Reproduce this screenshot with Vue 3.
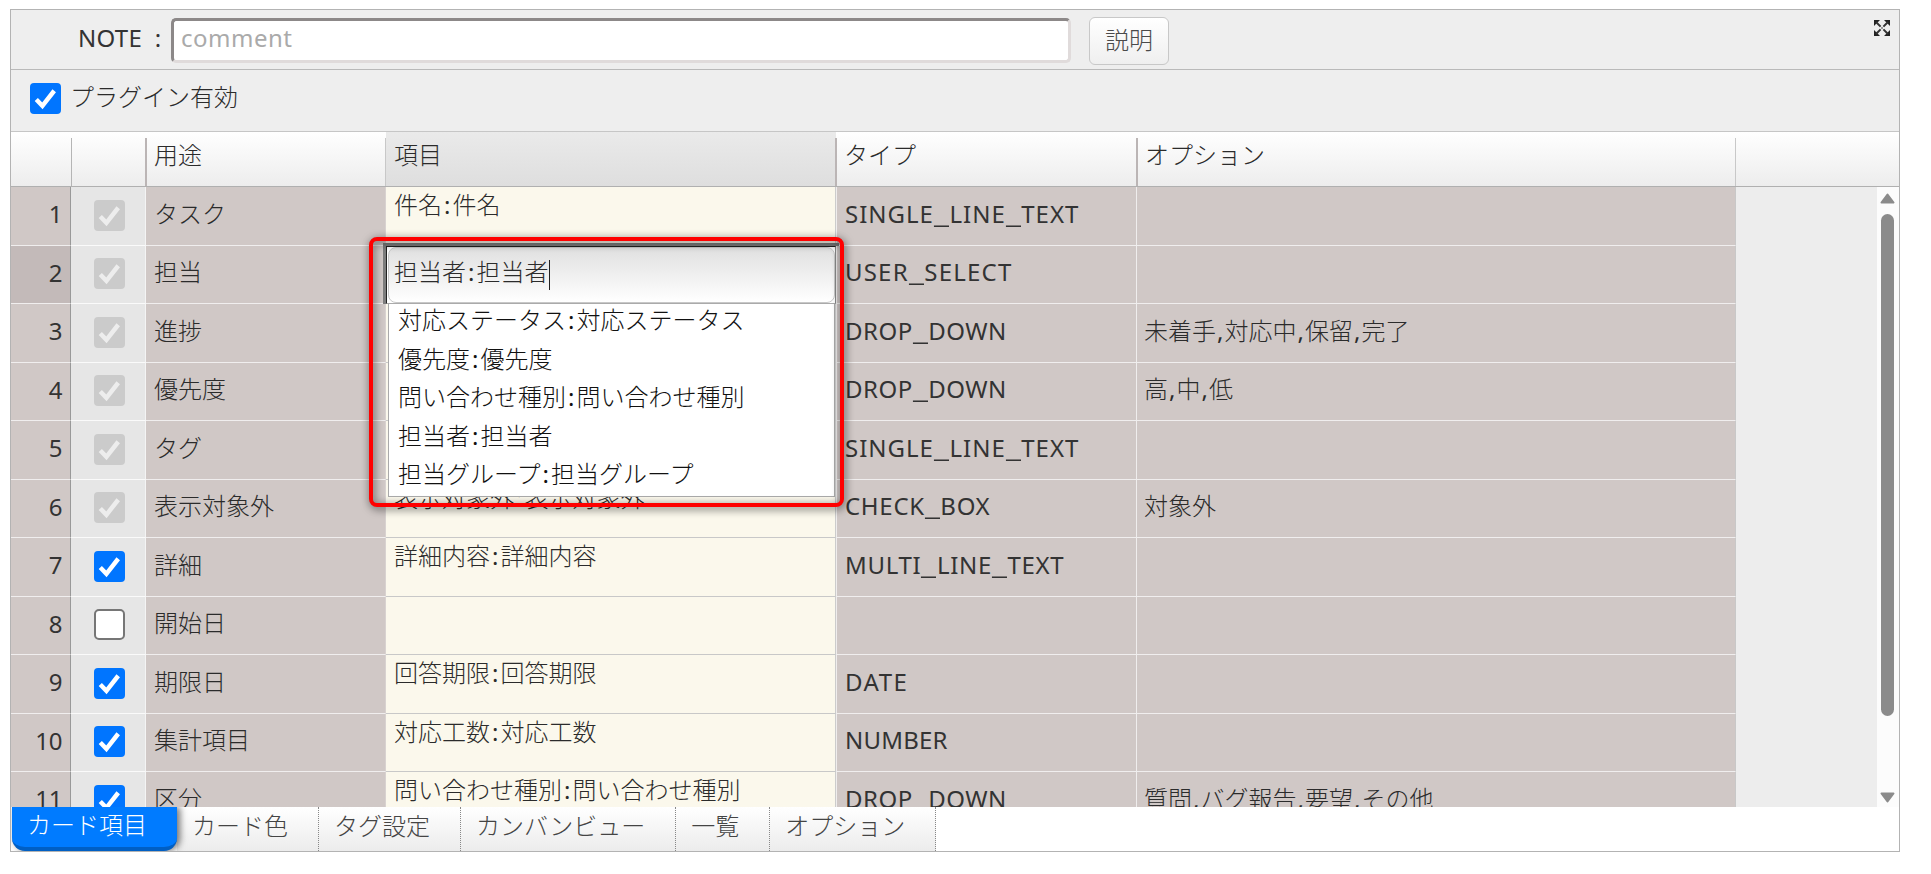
<script setup>
const rows = [
  { check: 'locked', use: 'タスク', item: '件名:件名', type: 'SINGLE_LINE_TEXT', option: '' },
  { check: 'locked', use: '担当', item: '', type: 'USER_SELECT', option: '' },
  { check: 'locked', use: '進捗', item: '', type: 'DROP_DOWN', option: '未着手,対応中,保留,完了' },
  { check: 'locked', use: '優先度', item: '', type: 'DROP_DOWN', option: '高,中,低' },
  { check: 'locked', use: 'タグ', item: '', type: 'SINGLE_LINE_TEXT', option: '' },
  { check: 'locked', use: '表示対象外', item: '表示対象外:表示対象外', type: 'CHECK_BOX', option: '対象外' },
  { check: 'on', use: '詳細', item: '詳細内容:詳細内容', type: 'MULTI_LINE_TEXT', option: '' },
  { check: 'off', use: '開始日', item: '', type: '', option: '' },
  { check: 'on', use: '期限日', item: '回答期限:回答期限', type: 'DATE', option: '' },
  { check: 'on', use: '集計項目', item: '対応工数:対応工数', type: 'NUMBER', option: '' },
  { check: 'on', use: '区分', item: '問い合わせ種別:問い合わせ種別', type: 'DROP_DOWN', option: '質問,バグ報告,要望,その他' },
]
const choices = [
  '対応ステータス:対応ステータス',
  '優先度:優先度',
  '問い合わせ種別:問い合わせ種別',
  '担当者:担当者',
  '担当グループ:担当グループ',
]
const tabs = ['カード項目', 'カード色', 'タグ設定', 'カンバンビュー', '一覧', 'オプション']
const classes = { ':': 'colon', ',': 'comma', _: 'under' }
const parts = (text) => text.split(/([:,_])/).filter(Boolean)
const partClass = (p) => classes[p] || 'word'
</script>

<template>
  <main class="page">
    <div class="frame">
      <header class="note-bar">
        <label class="note-label">NOTE :</label>
        <div class="note-input">comment</div>
        <button class="help" type="button">説明</button>
        <svg class="expand" viewBox="0 0 16 16" width="16" height="16">
          <path d="M0 0H6L4.3 1.7L1.7 4.3L0 6ZM16 0V6L11.7 1.7L10 0ZM0 16V10L4.3 14.3L6 16ZM16 16H10L14.3 11.7L16 10Z" fill="#222" />
          <path d="M2 2L6.6 6.600M14 2L9.400 6.600M2 14L6.600 9.400M14 14L9.400 9.400" stroke="#333" stroke-width="2" />
          <path d="M7 7h2v2h-2z" fill="#999" />
        </svg>
      </header>

      <div class="enable-bar">
        <span class="check on"><svg viewBox="0 0 32 32"><path d="M6.500 17L12.800 23.500L25 8" /></svg></span>
        <span class="enable-label">プラグイン有効</span>
      </div>

      <div class="cols head">
        <div></div>
        <div class="sep"></div>
        <div class="sep dbl">用途</div>
        <div class="sep current">項目</div>
        <div class="sep dbl">タイプ</div>
        <div class="sep dbl">オプション</div>
        <div class="sep last"></div>
      </div>

      <div class="body">
        <div class="rows">
          <div v-for="(row, i) in rows" :key="i" class="cols row" :class="{ selected: i === 1 }">
            <div class="num">{{ i + 1 }}</div>
            <div class="tick">
              <span class="check" :class="row.check">
                <svg v-if="row.check !== 'off'" viewBox="0 0 32 32"><path d="M6.500 17L12.800 23.500L25 8" /></svg>
              </span>
            </div>
            <div class="cell use">{{ row.use }}</div>
            <div class="cell item"><span v-for="(p, k) in parts(row.item)" :key="k" :class="partClass(p)">{{ p }}</span></div>
            <div class="cell type" :class="row.type.toLowerCase()"><span v-for="(p, k) in parts(row.type)" :key="k" :class="partClass(p)">{{ p }}</span></div>
            <div class="cell option"><span v-for="(p, k) in parts(row.option)" :key="k" :class="partClass(p)">{{ p }}</span></div>
            <div></div>
          </div>
        </div>
        <div class="scroll">
          <svg width="15" height="11" viewBox="0 0 15 11"><path d="M7.500 1.500L13.500 9.500H1.500Z" /></svg>
          <div class="thumb"></div>
          <svg width="15" height="11" viewBox="0 0 15 11"><path d="M7.500 9.500L13.500 1.500H1.500Z" /></svg>
        </div>
      </div>

      <nav class="tabs">
        <div v-for="(t, i) in tabs" :key="t" class="tab" :class="{ active: i === 0 }">{{ t }}</div>
      </nav>
    </div>

    <div class="editor">
      <div class="field"><span v-for="(p, k) in parts('担当者:担当者')" :key="k" :class="partClass(p)">{{ p }}</span><i class="caret"></i></div>
    </div>
    <div class="choices">
      <div v-for="c in choices" :key="c" class="choice"><span v-for="(p, k) in parts(c)" :key="k" :class="partClass(p)">{{ p }}</span></div>
    </div>
    <div class="highlight"></div>
  </main>
</template>

<style>
body {
  background: #fff;
}
</style>

<style scoped>
* {
  box-sizing: border-box;
}
.page {
  position: relative;
  width: 1931px;
  height: 874px;
  padding: 9px 0 0 10px;
  overflow: hidden;
  font: 24px/36px "Noto Sans", "Noto Sans CJK JP", sans-serif;
  font-weight: 300;
  color: #2b2b2b;
}
.frame {
  display: flex;
  flex-direction: column;
  width: 1890px;
  height: 843px;
  border: 1px solid #b3b3b3;
  background: #fff;
}
.note-bar {
  display: flex;
  align-items: flex-start;
  height: 60px;
  border-bottom: 1px solid #b9b9b9;
  background: #eee;
}
.note-label {
  width: 160px;
  padding: 10px 0 0 67px;
  color: #333;
  font-weight: 400;
  letter-spacing: 0.3px;
  word-spacing: 6px;
  white-space: nowrap;
}
.note-input {
  width: 900px;
  height: 45px;
  margin-top: 8px;
  padding-left: 7px;
  border: 3px solid;
  border-color: #8c8888 #e0dbdb #e0dbdb #8c8888;
  border-radius: 5px;
  background: #fff;
  color: #aaa;
  font-weight: 400;
  letter-spacing: 0.5px;
  line-height: 34px;
}
.help {
  width: 80px;
  height: 48px;
  margin: 7px 0 0 18px;
  padding: 0 0 2px;
  border: 1px solid #c8c8c8;
  border-radius: 6px;
  background: linear-gradient(#fff, #efefef);
  font: inherit;
  color: #4a4a4a;
}
.expand {
  margin: 10px 9px 0 auto;
}
.enable-bar {
  display: flex;
  align-items: flex-start;
  height: 62px;
  padding: 13px 0 0 19px;
  border-bottom: 1px solid #c6c6c6;
  background: #eee;
}
.enable-label {
  margin: -4px 0 0 9px;
}
.check {
  display: block;
  flex: none;
  width: 31px;
  height: 31px;
  border-radius: 4px;
}
.check.on {
  background: #0075ff;
}
.check.locked {
  background: #cbcbcb;
}
.check.off {
  border: 2px solid #767676;
  border-radius: 5px;
  background: #fff;
}
.check svg {
  display: block;
  width: 31px;
  height: 31px;
  fill: none;
  stroke: #fff;
  stroke-width: 4.6;
}
.check.locked svg {
  stroke: #ededed;
}
.cols {
  display: grid;
  grid-template-columns: 60px 75px 240px 450px 301px 599px 1fr;
}
.head {
  height: 55px;
  border-bottom: 1px solid #b0b0b0;
  background: linear-gradient(#fff, #ededed);
}
.head > div {
  position: relative;
  padding: 5px 0 0 8px;
}
.head > .current {
  background: linear-gradient(#eaeaea, #dedede);
}
.sep::before {
  content: '';
  position: absolute;
  left: 0;
  top: 6px;
  bottom: 0;
  width: 1px;
  background: #b5b5b5;
}
.sep.dbl::before {
  left: -1px;
  width: 2px;
  background: #bbb5b5;
}
.sep.current::before,
.sep.last::before {
  left: -1px;
  background: #c8c8c8;
}
.body {
  display: flex;
  height: 620px;
  overflow: hidden;
}
.rows {
  width: 1866px;
  background: #ededed;
}
.row {
  height: 59px;
}
.row:nth-child(even) {
  height: 58px;
}
.num {
  padding: 9px 8px 0 0;
  border-right: 1px solid #999;
  border-bottom: 1px solid #f0eeee;
  background: #d0c8c6;
  color: #333;
  font-weight: 400;
  letter-spacing: -0.4px;
  text-align: right;
}
.selected .num {
  background: #c3bab9;
}
.tick {
  padding: 13px 0 0 23px;
  border-right: 1px solid #f4f4f4;
  border-bottom: 1px solid #fafafa;
  background: #e6e6e6;
}
.row:nth-child(even) .tick {
  padding-top: 12px;
}
.cell {
  padding: 9px 0 0 8px;
  border-bottom: 1px solid #f0eeee;
  background: #d0c8c6;
  white-space: nowrap;
}
.use {
  border-right: 1px solid #d8d2d0;
}
.row:nth-child(even) .cell:not(.item) {
  padding-top: 8px;
}
.cell.item {
  padding: 0 0 0 8px;
  border-bottom-color: #c8c8c8;
  border-right: 1px solid #ccc;
  background: #fbf8ec;
}
.type {
  border-left: 1px solid #efeded;
  border-right: 1px solid #efeded;
  color: #333;
  font-weight: 400;
  letter-spacing: 0.5px;
}
.single_line_text {
  letter-spacing: 1px;
}
.user_select {
  letter-spacing: 1.2px;
}
.multi_line_text,
.check_box {
  letter-spacing: 0.7px;
}
.date {
  letter-spacing: 1.5px;
}
.number {
  letter-spacing: 0.2px;
}
.option {
  border-right: 1px solid #c8c8c8;
}
.cell.option {
  padding-left: 7px;
}
.colon,
.comma {
  display: inline-block;
  width: 10.500px;
  font-weight: 400;
  text-align: center;
}
.comma {
  width: 8.500px;
}
.under {
  display: inline-block;
  width: 15.500px;
  transform: scaleX(1.4);
  transform-origin: left;
}
.scroll {
  display: flex;
  flex-direction: column;
  align-items: center;
  width: 22px;
  padding: 6px 1px 4px 0;
  background: #fcfcfc;
}
.scroll svg {
  fill: #8b8b8b;
  stroke: #8b8b8b;
  stroke-width: 2;
  stroke-linejoin: round;
}
.thumb {
  width: 13px;
  height: 502px;
  margin: 10px 0 auto;
  border-radius: 7px;
  background: #8b8b8b;
}
.tabs {
  display: flex;
  height: 44px;
  background: #fff;
}
.tab {
  height: 44px;
  padding: 1px 30px 0 15px;
  border-right: 1px dotted #888;
  background: linear-gradient(#fff, #ececec);
  color: #444;
  white-space: nowrap;
}
.tab.active {
  z-index: 1;
  width: 165px;
  height: 44px;
  margin: 0 0 0 1px;
  padding: 0 0 0 15px;
  border: 0;
  border-bottom: 4px solid #005fc4;
  border-radius: 0 0 13px 13px;
  background: #007bff;
  box-shadow: 3px 0 7px rgba(0, 0, 0, 0.55);
  color: #fff;
  line-height: 35px;
  clip-path: inset(0 -14px 0 -1px);
}
.editor {
  position: absolute;
  left: 383px;
  top: 243px;
  width: 456px;
  height: 61px;
  border-top: 3px solid #7d7d7d;
  border-left: 3px solid #7d7d7d;
}
.field {
  position: relative;
  display: flex;
  align-items: flex-start;
  width: 450px;
  height: 58px;
  padding: 7px 0 0 7px;
  border: 1px solid #222;
  border-right-color: #888;
  border-bottom-color: #aaa;
  background: #fff;
  white-space: nowrap;
}
.field::before {
  content: '';
  position: absolute;
  inset: 0 0 0 1px;
  border: 1px solid #c8c8c8;
  border-radius: 8px;
  background: linear-gradient(#e0e0e0, #fff);
}
.field > span {
  position: relative;
}
.caret {
  position: relative;
  width: 1px;
  height: 30px;
  margin-top: 6px;
  background: #222;
}
.choices {
  position: absolute;
  left: 388px;
  top: 303px;
  width: 447px;
  height: 194px;
  padding: 0 0 0 9px;
  border: 1px solid #aaa;
  background: #fff;
  color: #111;
}
.choice {
  height: 38.500px;
  line-height: 32px;
  white-space: nowrap;
}
.highlight {
  position: absolute;
  left: 369px;
  top: 237px;
  width: 475px;
  height: 270px;
  border: 4px solid #f00;
  border-radius: 8px;
  filter: drop-shadow(1px 2px 4px rgba(0, 0, 0, 0.7));
}
</style>
